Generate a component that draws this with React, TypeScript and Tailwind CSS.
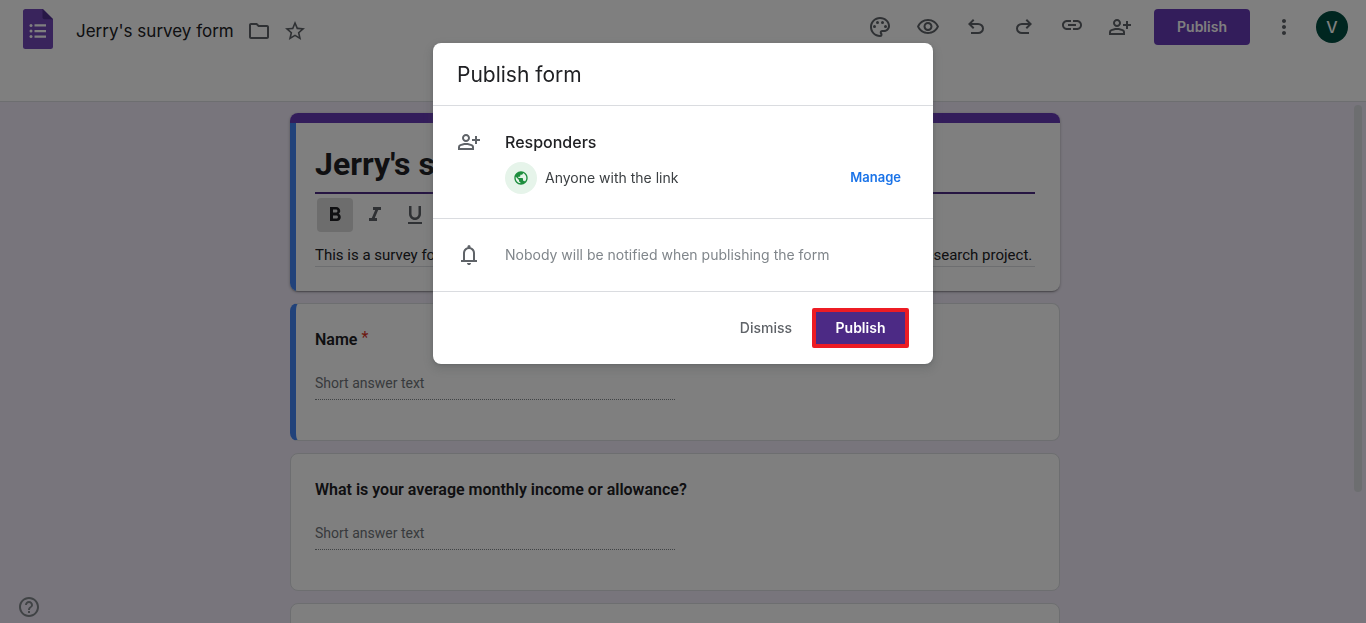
import React from 'react'
import {
  MdFormatBold,
  MdFormatItalic,
  MdFormatUnderlined,
  MdHelpOutline,
  MdLink,
  MdMoreVert,
  MdOutlineFolder,
  MdOutlinePalette,
  MdOutlinePersonAddAlt,
  MdOutlineVisibility,
  MdPublic,
  MdStarBorder,
} from 'react-icons/md'

const UNDO_PATH =
  'M280-200v-80h284q63 0 109.5-40T720-420q0-60-46.5-100T564-560H312l104 104-56 56-200-200 200-200 56 56-104 104h252q97 0 166.5 63T800-420q0 94-69.5 157T564-200H280Z'
const REDO_PATH =
  'M396-200q-97 0-166.5-63T160-420q0-94 69.5-157T396-640h252L544-744l56-56 200 200-200 200-56-56 104-104H396q-63 0-109.5 40T240-420q0 60 46.5 100T396-280h284v80H396Z'
const BELL_PATH =
  'M160-200v-80h80v-280q0-83 50-147.5T420-792v-28q0-25 17.5-42.5T480-880q25 0 42.5 17.5T540-820v28q80 20 130 84.5T720-560v280h80v80H160Zm320-300Zm0 420q-33 0-56.5-23.5T400-160h160q0 33-23.5 56.5T480-80ZM320-280h320v-280q0-66-47-113t-113-47q-66 0-113 47t-47 113v280Z'

function Symbol({ path }: { path: string }) {
  return (
    <svg width="24" height="24" viewBox="0 -960 960 960" fill="currentColor" aria-hidden="true">
      <path d={path} />
    </svg>
  )
}

function FormsLogo() {
  return (
    <svg width="30" height="40" viewBox="0 0 30 40" aria-hidden="true">
      <path d="M2.500 0H20l10 10v27.500a2.500 2.500 0 0 1-2.500 2.500h-25A2.500 2.500 0 0 1 0 37.500v-35A2.500 2.500 0 0 1 2.500 0z" fill="#7248b9" />
      <path d="M19.500 0 30 10.200h-8.500a2 2 0 0 1-2-2z" fill="#4f2e8c" />
      <g fill="#fff">
        <circle cx="8" cy="16.500" r="1.500" />
        <circle cx="8" cy="22" r="1.500" />
        <circle cx="8" cy="27.500" r="1.500" />
        <path d="M11.500 15.300h11.500v2.300H11.500zM11.500 20.900h11.500v2.300H11.500zM11.500 26.400h11.500v2.300H11.500z" />
      </g>
    </svg>
  )
}

function IconButton({ label, children }: { label: string; children: React.ReactNode }) {
  return (
    <button type="button" aria-label={label} className="flex size-12 items-center justify-center text-[#5f6368]">
      {children}
    </button>
  )
}

function Header() {
  return (
    <header className="flex h-[102px] shrink-0 items-start justify-between border-b border-[#dadce0] bg-white pr-[18px] pl-[23px]">
      <div className="flex items-center pt-[9px]">
        <a href="#home" aria-label="Forms home">
          <FormsLogo />
        </a>
        <h1 className="ml-[23px] pt-1 text-[17px] leading-6 text-[#202124]">Jerry's survey form</h1>
        <div className="ml-[13px] flex items-center gap-3 pt-1 text-[#5f6368]">
          <button type="button" aria-label="Move to folder">
            <MdOutlineFolder size={24} />
          </button>
          <button type="button" aria-label="Star">
            <MdStarBorder size={24} />
          </button>
        </div>
      </div>
      <div className="flex items-center pt-[3px]">
        <IconButton label="Customize theme">
          <MdOutlinePalette size={24} />
        </IconButton>
        <IconButton label="Preview">
          <MdOutlineVisibility size={24} />
        </IconButton>
        <IconButton label="Undo">
          <Symbol path={UNDO_PATH} />
        </IconButton>
        <IconButton label="Redo">
          <Symbol path={REDO_PATH} />
        </IconButton>
        <IconButton label="Copy responder link">
          <MdLink size={24} className="mb-1" />
        </IconButton>
        <IconButton label="Share">
          <MdOutlinePersonAddAlt size={24} />
        </IconButton>
        <button type="button" className="mx-[10px] h-9 w-24 rounded bg-[#673ab7] text-sm font-semibold text-white">
          Publish
        </button>
        <IconButton label="More options">
          <MdMoreVert size={24} />
        </IconButton>
        <button
          type="button"
          aria-label="Account"
          className="ml-2 size-8 rounded-full bg-[#004d40] text-base leading-8 font-medium text-white"
        >
          V
        </button>
      </div>
    </header>
  )
}

function TitleCard() {
  return (
    <section className="overflow-hidden rounded-lg bg-white shadow-[0_2px_1px_-1px_rgba(0,0,0,0.2),0_1px_3px_0_rgba(0,0,0,0.3)]">
      <div className="h-[10px] bg-[#673ab7]" />
      <div className="border-l-6 border-[#4285f4] pt-4 pr-[25px] pb-6 pl-[19px]">
        <input
          aria-label="Form title"
          defaultValue="Jerry's survey form"
          className="block h-[55px] w-full border-b-2 border-[#4c2a85] bg-transparent pb-1 text-[32px] font-bold text-[#202124] outline-none"
        />
        <div className="mt-1 ml-[2px] flex gap-1 text-[#5f6368]">
          <button type="button" aria-label="Bold" className="flex h-[34px] w-9 items-center justify-center rounded bg-[#dadada] text-[#202124]">
            <MdFormatBold size={24} />
          </button>
          <button type="button" aria-label="Italic" className="flex h-[34px] w-9 items-center justify-center">
            <MdFormatItalic size={24} />
          </button>
          <button type="button" aria-label="Underline" className="flex h-[34px] w-9 items-center justify-center">
            <MdFormatUnderlined size={24} />
          </button>
        </div>
        <input
          aria-label="Form description"
          defaultValue="This is a survey form to collect responses about the incomes and savings of students for a research project."
          className="mt-3 block h-[23px] w-full border-b border-[#dadce0] bg-transparent text-[15px] text-[#202124] outline-none"
        />
      </div>
    </section>
  )
}

interface QuestionCardProps {
  id: string
  title: string
  required?: boolean
  selected?: boolean
}

function QuestionCard({ id, title, required = false, selected = false }: QuestionCardProps) {
  return (
    <section
      className={`overflow-hidden rounded-lg border border-[#dadce0] bg-white pt-6 pr-6 pb-10 ${
        selected ? 'border-l-6 border-l-[#4285f4] pl-[19px]' : 'pl-6'
      }`}
    >
      <label htmlFor={id} className="block text-base leading-6 font-semibold text-[#202124]">
        {title}
        {required && <span className="ml-1 align-top text-base leading-5 font-normal text-[#d93025]">*</span>}
      </label>
      <input
        id={id}
        readOnly
        placeholder="Short answer text"
        className="mt-[14px] block h-[34px] w-1/2 border-b border-dotted border-[#80868b] bg-transparent text-sm text-[#202124] outline-none placeholder:text-[#70757a]"
      />
    </section>
  )
}

function PublishDialog() {
  return (
    <div className="fixed inset-0 flex items-start justify-center bg-black/50 pt-[43px]">
      <div
        role="dialog"
        aria-modal="true"
        aria-labelledby="publish-title"
        className="w-[500px] divide-y divide-[#dadce0] rounded-lg bg-white shadow-[0_1px_3px_rgba(60,64,67,0.3),0_4px_8px_3px_rgba(60,64,67,0.15)]"
      >
        <h2 id="publish-title" className="px-6 pt-[18px] pb-4 text-[21px] leading-7 text-[#202124]">
          Publish form
        </h2>
        <div className="flex gap-6 py-6 pr-8 pl-6">
          <MdOutlinePersonAddAlt size={24} className="shrink-0 text-[#5f6368]" />
          <div className="flex-1">
            <h3 className="text-base leading-6 font-medium text-[#202124]">Responders</h3>
            <div className="mt-2 flex items-center">
              <span className="flex size-8 items-center justify-center rounded-full bg-[#e6f4ea] text-[#1e8e3e]">
                <MdPublic size={16} />
              </span>
              <span className="ml-2 text-sm text-[#3c4043]">Anyone with the link</span>
              <button type="button" className="ml-auto text-[13px] font-semibold text-[#1a73e8]">
                Manage
              </button>
            </div>
          </div>
        </div>
        <div className="flex items-center gap-6 p-6 text-[#5f6368]">
          <Symbol path={BELL_PATH} />
          <p className="text-sm text-[#80868b]">Nobody will be notified when publishing the form</p>
        </div>
        <div className="flex items-center justify-end gap-5 px-6 py-4 text-sm font-medium">
          <button type="button" className="text-[#5f6368]">
            Dismiss
          </button>
          <button type="button" className="h-10 w-[97px] rounded-xs border-4 border-[#ed1c24] bg-[#4c2a85] font-semibold text-white">
            Publish
          </button>
        </div>
      </div>
    </div>
  )
}

export default function App() {
  return (
    <div className="flex h-screen flex-col overflow-hidden bg-[#f0ebf8] font-['Inter',sans-serif]">
      <Header />
      <div className="relative flex min-h-0 flex-1">
        <main className="flex-1 overflow-hidden pt-[11px] font-['Roboto',sans-serif]">
          <div className="mx-auto flex max-w-[770px] flex-col gap-3">
            <TitleCard />
            <QuestionCard id="name" title="Name" required selected />
            <QuestionCard id="income" title="What is your average monthly income or allowance?" />
            <QuestionCard id="next" title="" />
          </div>
        </main>
        <div className="w-4 pt-[3px]">
          <div className="mx-auto h-[387px] w-2 rounded-full bg-[#dadce0]" />
        </div>
        <button type="button" aria-label="Help" className="absolute bottom-1 left-[17px] text-[#80868b]">
          <MdHelpOutline size={24} />
        </button>
      </div>
      <PublishDialog />
    </div>
  )
}
